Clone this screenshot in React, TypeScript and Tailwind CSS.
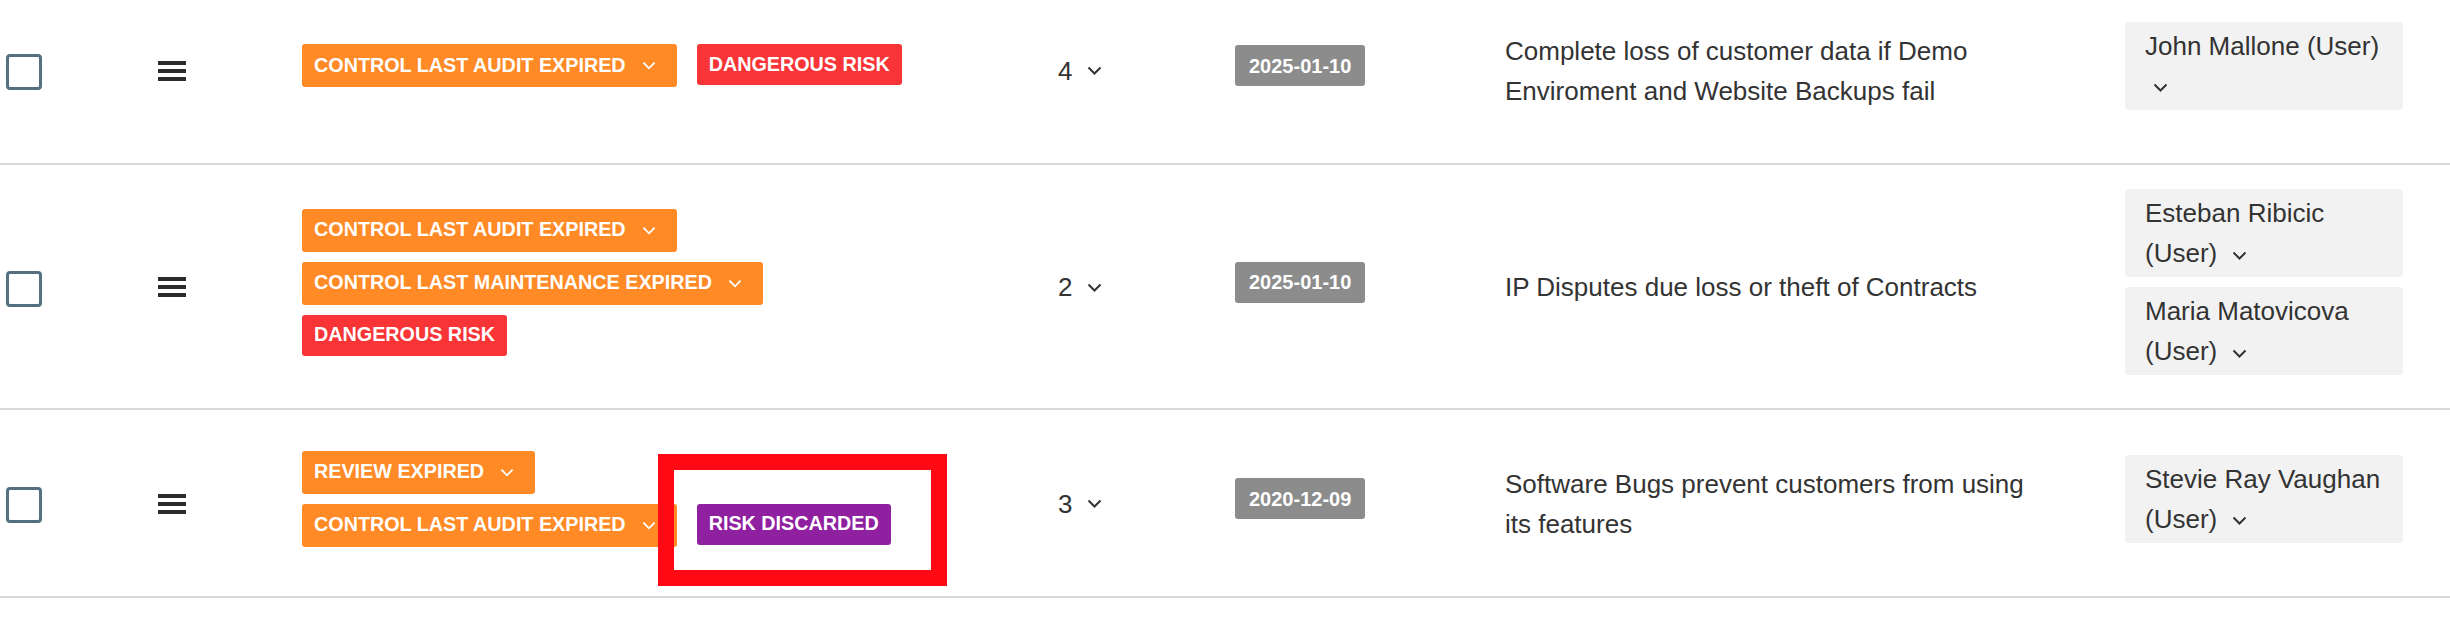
import React from 'react'

type Tag = { label: string; tone: 'orange' | 'red' | 'purple'; dropdown?: boolean }

type Risk = {
  tags: Tag[]
  score: number
  date: string
  description: string
  owners: string[]
  highlight?: boolean
}

const risks: Risk[] = [
  {
    tags: [
      { label: 'CONTROL LAST AUDIT EXPIRED', tone: 'orange', dropdown: true },
      { label: 'DANGEROUS RISK', tone: 'red' },
    ],
    score: 4,
    date: '2025-01-10',
    description: 'Complete loss of customer data if Demo Enviroment and Website Backups fail',
    owners: ['John Mallone'],
  },
  {
    tags: [
      { label: 'CONTROL LAST AUDIT EXPIRED', tone: 'orange', dropdown: true },
      { label: 'CONTROL LAST MAINTENANCE EXPIRED', tone: 'orange', dropdown: true },
      { label: 'DANGEROUS RISK', tone: 'red' },
    ],
    score: 2,
    date: '2025-01-10',
    description: 'IP Disputes due loss or theft of Contracts',
    owners: ['Esteban Ribicic', 'Maria Matovicova'],
  },
  {
    tags: [
      { label: 'REVIEW EXPIRED', tone: 'orange', dropdown: true },
      { label: 'CONTROL LAST AUDIT EXPIRED', tone: 'orange', dropdown: true },
      { label: 'RISK DISCARDED', tone: 'purple' },
    ],
    score: 3,
    date: '2020-12-09',
    description: 'Software Bugs prevent customers from using its features',
    owners: ['Stevie Ray Vaughan'],
    highlight: true,
  },
]

const toneClass: Record<Tag['tone'], string> = {
  orange: 'bg-[#ff8a26] h-[43px]',
  red: 'bg-[#f83437] h-[41px]',
  purple: 'bg-[#8f20a0] h-[41px]',
}

const Chevron = ({ className = '' }: { className?: string }) => (
  <svg width="15" height="9" viewBox="0 0 15 9" fill="none" className={className}>
    <path d="M1.5 1.5L7.5 7.5L13.5 1.5" stroke="currentColor" strokeWidth="2" />
  </svg>
)

const TagBadge = ({ tag }: { tag: Tag }) => (
  <div
    className={`flex items-center mb-[10px] rounded-[3px] pl-[12px] ${tag.dropdown ? 'pr-[21px]' : 'pr-[12px]'} ${toneClass[tag.tone]} text-white font-bold text-[19.75px] leading-none`}
  >
    <span>{tag.label}</span>
    {tag.dropdown && <Chevron className="ml-[16px] w-[14px] h-[9px]" />}
  </div>
)

const Row = ({ risk }: { risk: Risk }) => (
  <div className="relative flex items-center min-h-[188px] pt-[24px] pb-[23px] border-b-2 border-[#d9d9d9]">
    {/* select */}
    <div className="w-[158px] shrink-0 pl-[6px] pt-[3px]">
      <div className="w-[36px] h-[36px] rounded-[4px] border-[3px] border-[#537181]" />
    </div>

    {/* drag handle */}
    <div className="w-[144px] shrink-0">
      <div className="flex flex-col gap-[4px] w-[28px]">
        <span className="h-[4px] bg-[#2b2b2b]" />
        <span className="h-[4px] bg-[#2b2b2b]" />
        <span className="h-[4px] bg-[#2b2b2b]" />
      </div>
    </div>

    {/* status tags */}
    <div className="w-[756px] shrink-0">
      <div className="w-[610px] flex flex-wrap items-start gap-x-[20px]">
        {risk.tags.map((t, i) => (
          <TagBadge key={i} tag={t} />
        ))}
      </div>
    </div>

    {/* score */}
    <div className="w-[177px] shrink-0 flex items-center text-[26px] leading-[40px] text-[#333]">
      <span>{risk.score}</span>
      <Chevron className="ml-[15px] text-[#333]" />
    </div>

    {/* date */}
    <div className="w-[270px] shrink-0">
      <div className="inline-flex items-center h-[41px] mb-[10px] px-[14px] rounded-[3px] bg-[#8c8c8c] text-white font-bold text-[20px] leading-none">
        {risk.date}
      </div>
    </div>

    {/* description */}
    <div className="w-[620px] shrink-0">
      <p className="max-w-[530px] text-[26px] leading-[40px] text-[#333]">{risk.description}</p>
    </div>

    {/* owners */}
    <div className="w-[278px] shrink-0 flex flex-col">
      {risk.owners.map(o => (
        <div
          key={o}
          className="mb-[10px] rounded-[4px] bg-[#f2f2f2] pl-[20px] pr-[16px] py-[4px] text-[26px] leading-[40px] text-[#333]"
        >
          {o} (User){' '}
          <Chevron className="inline-block ml-[8px] align-middle" />
        </div>
      ))}
    </div>

    {risk.highlight && (
      <div className="absolute left-[658px] top-[44px] w-[289px] h-[132px] border-[16px] border-[#ff0a14] z-10 pointer-events-none" />
    )}
  </div>
)

export default function App() {
  return (
    <div className="w-[2450px] h-[622px] overflow-hidden bg-white" style={{ fontFamily: '"Liberation Sans", Arial, sans-serif' }}>
      <div className="-mt-[23px]">
        {risks.map((r, i) => (
          <Row key={i} risk={r} />
        ))}
      </div>
    </div>
  )
}
